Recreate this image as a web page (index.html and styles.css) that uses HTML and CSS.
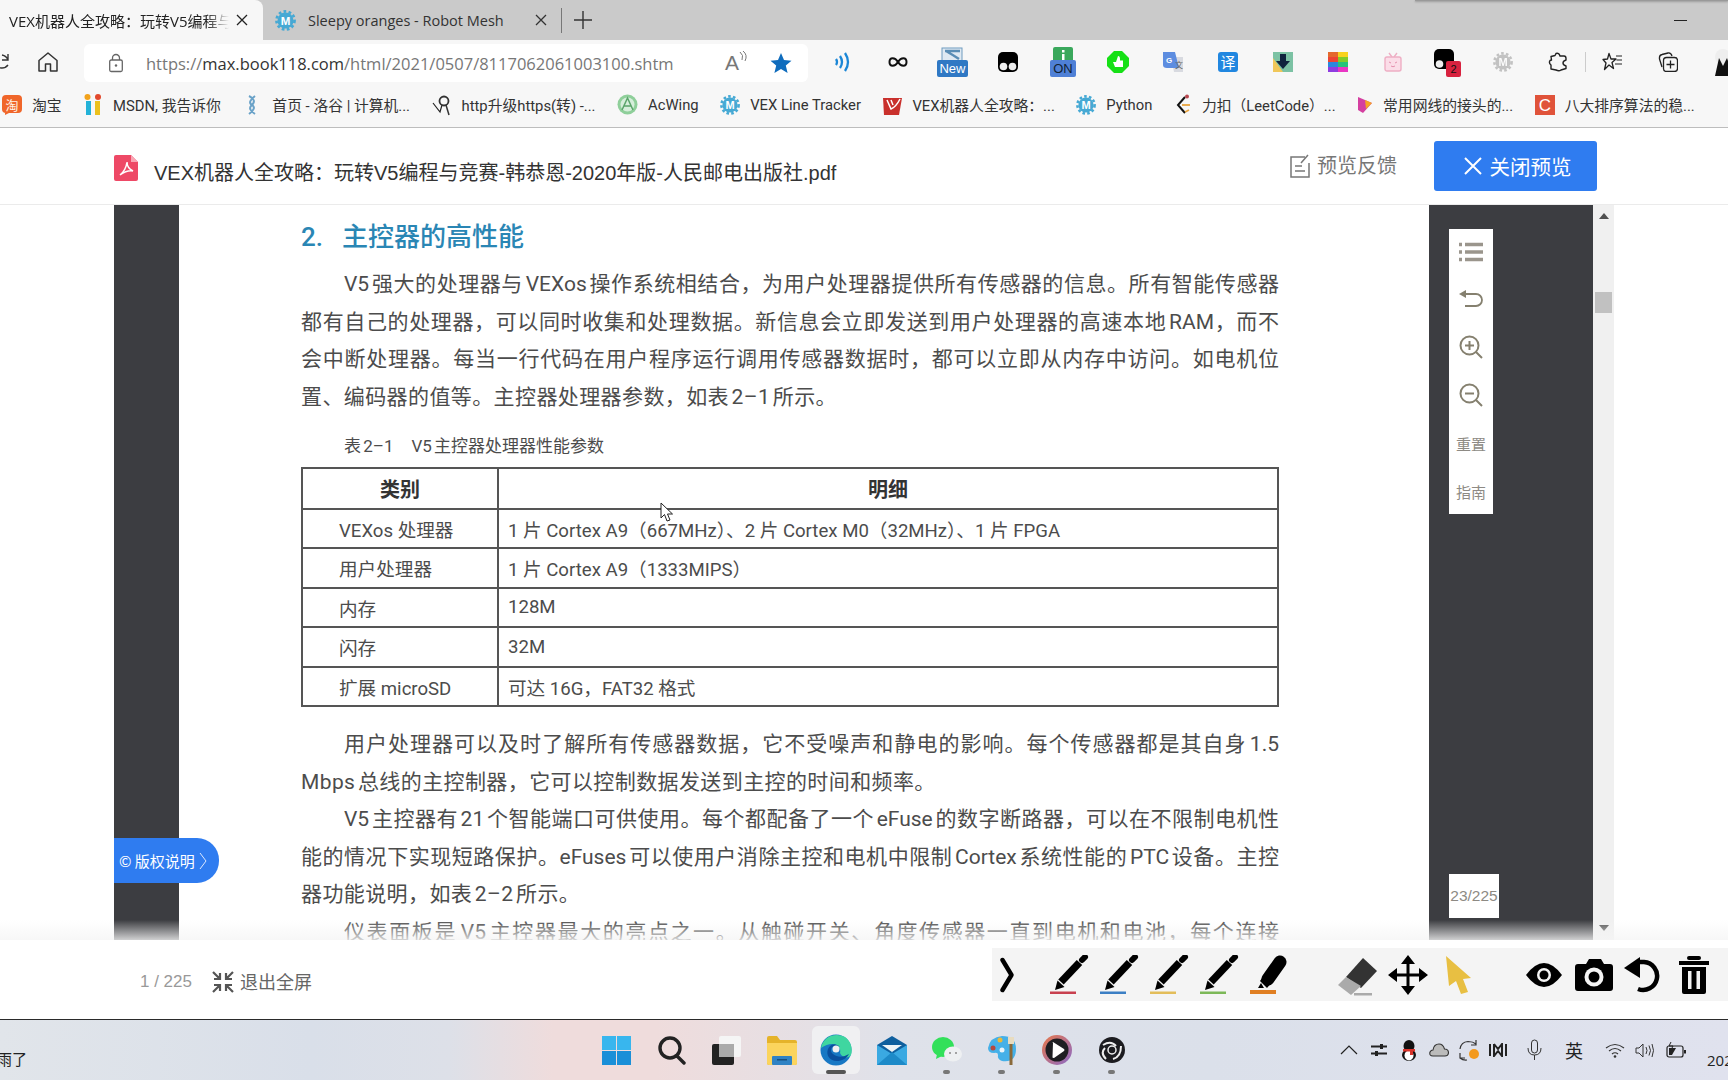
FILE: index.html
```html
<!DOCTYPE html>
<html lang="zh-CN">
<head>
<meta charset="utf-8">
<title>VEX机器人全攻略</title>
<link rel="stylesheet" href="styles.css">
</head>
<body>
<svg class="defs" width="0" height="0">
  <symbol id="gear" viewBox="0 0 20 20">
    <circle cx="10" cy="10" r="7.6" fill="#46a9d4"/>
    <circle cx="10" cy="10" r="8.6" fill="none" stroke="#46a9d4" stroke-width="2.6" stroke-dasharray="2.6 2.2"/>
    <text x="10" y="14" text-anchor="middle" font-size="11" font-weight="700" fill="#fff" font-family="Liberation Sans">M</text>
  </symbol>
  <symbol id="pen" viewBox="0 0 40 40">
    <path d="M11 27 L29.500 7.500" stroke="#000" stroke-width="7.500" fill="none"/>
    <path d="M32 5 L35 2" stroke="#000" stroke-width="6" stroke-linecap="round" fill="none"/>
    <path d="M5 35 L7.500 25.500 L14.500 32 Z" fill="#000"/>
  </symbol>
</svg>

<div class="app">
  <div class="tabs">
    <div class="tab active">
      <span class="tab-title">VEX机器人全攻略：玩转V5编程与竞赛-韩恭恩</span>
      <svg class="tab-x" width="12" height="12" viewBox="0 0 12 12"><path d="M1 1 L11 11 M11 1 L1 11" stroke="#222" stroke-width="1.300"/></svg>
    </div>
    <div class="tab second">
      <svg width="21" height="21"><use href="#gear"/></svg>
      <span class="tab-name">Sleepy oranges - Robot Mesh</span>
      <svg class="tab-x2" width="12" height="12" viewBox="0 0 12 12"><path d="M1 1 L11 11 M11 1 L1 11" stroke="#333" stroke-width="1.300"/></svg>
    </div>
    <span class="tab-div"></span>
    <svg class="tab-plus" width="18" height="18" viewBox="0 0 18 18"><path d="M9 0 V18 M0 9 H18" stroke="#333" stroke-width="1.400"/></svg>
    <span class="tabs-space"></span>
    <span class="minimize"></span>
  </div>

  <div class="toolbar">
    <svg class="tb-refresh" width="10" height="22" viewBox="0 0 10 22"><path d="M-6 11 A8 8 0 0 0 8 14 M8 9 A8 8 0 0 0 2 4 M8 3 V9 H2" stroke="#333" stroke-width="1.400" fill="none"/></svg>
    <svg class="tb-home" width="22" height="22" viewBox="0 0 22 22"><path d="M11 2 L2 9.500 V20 H8.500 V13 H13.500 V20 H20 V9.500 Z" stroke="#333" stroke-width="1.500" fill="none" stroke-linejoin="round"/></svg>
    <div class="address">
      <svg class="lock" width="18" height="20" viewBox="0 0 18 20"><path d="M5.500 7 V5 A3.500 3.500 0 0 1 12.500 5 V7" stroke="#666" stroke-width="1.300" fill="none"/><rect x="2.700" y="7" width="12.600" height="11.500" rx="1.500" stroke="#666" stroke-width="1.300" fill="none"/><circle cx="9" cy="12.500" r="1.200" fill="#666"/></svg>
      <span class="url">https://<b>max.book118.com</b>/html/2021/0507/8117062061003100.shtm</span>
      <span class="read">A<svg width="8" height="12" viewBox="0 0 8 12"><path d="M1 1 Q5 4 3 9 M4 0 Q9 4 6 10" stroke="#777" fill="none"/></svg></span>
      <svg class="star" width="22" height="22" viewBox="0 0 22 22"><path d="M11 1 L14 8 L21.500 8.700 L15.800 13.600 L17.600 21 L11 17 L4.400 21 L6.200 13.600 L.500 8.700 L8 8 Z" fill="#0f6cbd"/></svg>
    </div>
    <div class="exts">
      <span class="ext"><svg width="18" height="20" viewBox="0 0 18 20"><path d="M2 7 Q4 10 2 13 M6 4 Q10 10 6 16 M11 1 Q17 10 11 19" stroke="#1b86d6" stroke-width="2.300" fill="none"/></svg></span>
      <span class="ext"><svg width="20" height="12" viewBox="0 0 20 12"><path d="M10 6 C7 1 1.500 1 1.500 6 C1.500 11 7 11 10 6 C13 1 18.500 1 18.500 6 C18.500 11 13 11 10 6 Z" stroke="#111" stroke-width="2" fill="none"/></svg></span>
      <span class="ext"><svg width="31" height="30" viewBox="0 0 31 30"><rect x="5" y="1" width="20" height="16" fill="#dfe9f2" stroke="#6f9bbf"/><path d="M8 4 H23 M9 4 Q16 8 22 12" stroke="#5a8db5" stroke-width="2.500" fill="none"/><rect y="13" width="31" height="17" rx="2" fill="#2f78c4"/><text x="15.500" y="26" text-anchor="middle" font-size="13" fill="#fff" font-family="Liberation Sans">New</text></svg></span>
      <span class="ext"><svg width="20" height="20" viewBox="0 0 20 20"><rect width="20" height="20" rx="5" fill="#000"/><circle cx="5.500" cy="14.500" r="3.800" fill="#eee"/><circle cx="14.500" cy="14.500" r="3.800" fill="#eee"/></svg></span>
      <span class="ext"><svg width="26" height="30" viewBox="0 0 26 30"><path d="M3 2 Q3 0 5 0 H21 Q23 0 23 2 V14 H3 Z" fill="#3aa85c"/><rect x="12" y="3" width="2.500" height="2.500" fill="#fff"/><rect x="12" y="7" width="2.500" height="7" fill="#fff"/><rect y="13" width="26" height="17" rx="2" fill="#4f80d6"/><text x="13" y="26" text-anchor="middle" font-size="13" fill="#123" font-family="Liberation Sans">ON</text></svg></span>
      <span class="ext"><svg width="22" height="22" viewBox="0 0 22 22"><path d="M7 0 H15 L22 7 V15 L15 22 H7 L0 15 V7 Z" fill="#16e016"/><path d="M6 11 H9 L11 5 Q13 5 13 8 V9.500 H16 V16 H8 Z" fill="#fff"/></svg></span>
      <span class="ext"><svg width="22" height="22" viewBox="0 0 22 22"><path d="M9 6 H21 V21 H12 Z" fill="#d8dae0"/><path d="M1 1 H13 L17 17 H5 Q1 17 1 14 Z" fill="#5d8de0"/><text x="7" y="12" text-anchor="middle" font-size="8" font-weight="700" fill="#fff" font-family="Liberation Sans">G</text><text x="17" y="17" text-anchor="middle" font-size="8" fill="#666" font-family="Noto Sans CJK SC">文</text></svg></span>
      <span class="ext"><svg width="20" height="20" viewBox="0 0 20 20"><rect width="20" height="20" rx="3" fill="#2187e0"/><text x="10" y="15.500" text-anchor="middle" font-size="15" fill="#fff" font-family="Noto Sans CJK SC">译</text></svg></span>
      <span class="ext"><svg width="20" height="20" viewBox="0 0 20 20"><rect width="20" height="20" fill="#7cc2a4"/><path d="M0 6 L0 20 H10 Z" fill="#f0c75a"/><path d="M7 2 H13 V9 H17 L10 17 L3 9 H7 Z" fill="#10233d"/></svg></span>
      <span class="ext"><svg width="20" height="20" viewBox="0 0 20 20"><rect width="10" height="5" fill="#e4692e"/><rect x="10" width="10" height="5" fill="#f9d21e"/><rect y="5" width="10" height="5" fill="#ed4433"/><rect x="10" y="5" width="10" height="5" fill="#82cc2a"/><rect y="10" width="10" height="5" fill="#2b86dd"/><rect x="10" y="10" width="10" height="5" fill="#25c37a"/><rect y="15" width="10" height="5" fill="#8f3ce0"/><rect x="10" y="15" width="10" height="5" fill="#e936c4"/></svg></span>
      <span class="ext"><svg width="18" height="20" viewBox="0 0 18 20"><path d="M5 1 L8 5 M13 1 L10 5" stroke="#eeaec4" stroke-width="1.400"/><rect x="1" y="5" width="16" height="14" rx="2" fill="#fbdde8" stroke="#eeaec4" stroke-width="1.400"/><path d="M5 10 L7 11 M13 10 L11 11 M7 14 Q9 15.500 11 14" stroke="#e58fae" fill="none"/></svg></span>
      <span class="ext"><svg width="28" height="30" viewBox="0 0 28 30"><rect width="20" height="20" rx="5" y="2" fill="#000"/><circle cx="5.500" cy="17" r="3.800" fill="#eee"/><rect x="12" y="14" width="15" height="16" rx="2" fill="#d8223f"/><text x="19.500" y="26" text-anchor="middle" font-size="11" fill="#111" font-family="Liberation Sans">2</text></svg></span>
      <span class="ext"><svg class="faded" width="20" height="20"><use href="#gear"/></svg></span>
      <span class="ext"><svg width="20" height="20" viewBox="0 0 20 20"><path d="M8 1.500 Q11 .500 12 4 L16 4 Q18 4 18 6.500 L18 8 Q15 9 15 11 Q15 13 18 14 L18 16.500 L13 18 Q11 19.500 8 18 L3 17 L3 13 Q.500 11 2 8.500 L3.500 8 L3 4.500 L7 3.500 Z" stroke="#222" stroke-width="1.400" fill="none" stroke-linejoin="round"/></svg></span>
      <span class="ext-div"></span>
      <span class="ext"><svg width="22" height="20" viewBox="0 0 22 20"><path d="M7 1.500 L9 7 H14 L10 10.500 L11.500 16.500 L7 13 L2.500 17.500 L4 11 L1 7.500 L5.500 7 Z" stroke="#222" stroke-width="1.300" fill="none" stroke-linejoin="round"/><path d="M14 4 H20 M14.500 8 H20 M13 12 H20" stroke="#222" stroke-width="1.200"/></svg></span>
      <span class="ext"><svg width="20" height="20" viewBox="0 0 20 20"><path d="M4 15 L1.500 7 Q1 3 4 2.500 L10 1 Q13 .500 14 4" stroke="#222" stroke-width="1.300" fill="none"/><rect x="5.500" y="5.500" width="14" height="14" rx="3" stroke="#222" stroke-width="1.300" fill="#f7f7f7"/><path d="M12.500 8.500 V16.500 M8.500 12.500 H16.500" stroke="#222" stroke-width="1.300"/></svg></span>
      <span class="ext"><svg width="24" height="28" viewBox="0 0 24 28"><circle cx="12" cy="9" r="8" fill="#eee"/><path d="M4 28 L8 10 L12 18 L16 10 L22 28 Z" fill="#111"/></svg></span>
    </div>
  </div>

  <div class="bookmarks">
    <span class="bm first"><svg width="20" height="20" viewBox="0 0 20 20"><rect width="20" height="18" rx="4" fill="#f0662a"/><path d="M3 18 L3 20 L7 18 Z" fill="#f0662a"/><text x="10" y="15" text-anchor="middle" font-size="13" fill="#fff3e6" font-family="Noto Sans CJK SC">淘</text></svg>淘宝</span>
    <span class="bm"><svg width="20" height="22" viewBox="0 0 20 22"><rect x="3" y="7" width="5" height="14" fill="#23b2d8"/><circle cx="4.500" cy="3" r="3" fill="#f2a21b"/><rect x="12" y="7" width="5" height="14" fill="#ecc11d"/><circle cx="15" cy="3" r="3" fill="#e2492c"/></svg>MSDN, 我告诉你</span>
    <span class="bm"><svg width="20" height="22" viewBox="0 0 20 22"><path d="M7 2 Q15 6 10 11 Q5 15 13 20 M13 2 Q5 8 10 11 Q15 14 7 20" stroke="#6aa2c8" stroke-width="2" fill="none"/></svg>首页 - 洛谷 | 计算机...</span>
    <span class="bm"><svg width="20" height="22" viewBox="0 0 20 22"><path d="M1 9 L8 18 L10 11" stroke="#222" stroke-width="1.200" fill="none"/><circle cx="12" cy="7" r="4.500" stroke="#333" stroke-width="1.800" fill="none"/><path d="M14 11 L17 21" stroke="#333" stroke-width="1.500"/></svg>http升级https(转) -...</span>
    <span class="bm"><svg width="21" height="21" viewBox="0 0 21 21"><circle cx="10.500" cy="10.500" r="10" fill="#8fcf9a"/><circle cx="10.500" cy="10.500" r="7" fill="#d6eedb"/><path d="M5 16 L10.500 4 L16 16 M7 12 H14" stroke="#5aa46a" stroke-width="1.500" fill="none"/></svg>AcWing</span>
    <span class="bm"><svg width="20" height="20"><use href="#gear"/></svg>VEX Line Tracker</span>
    <span class="bm"><svg width="20" height="20" viewBox="0 0 20 20"><path d="M1 3 H20 L17 20 H2 Z" fill="#c9302c"/><path d="M5 5 L9 14 Q14 12 18 4 M9 5 L11 10" stroke="#fff" stroke-width="1.500" fill="none"/></svg>VEX机器人全攻略：...</span>
    <span class="bm"><svg width="20" height="20"><use href="#gear"/></svg>Python</span>
    <span class="bm"><svg width="18" height="22" viewBox="0 0 18 22"><path d="M11 3 L4 11 L11 19" stroke="#111" stroke-width="2" fill="none"/><path d="M8 11 H16" stroke="#e8a33d" stroke-width="1.800"/><circle cx="13" cy="2.500" r="2" fill="#b8474f"/><path d="M11 18 L15 16" stroke="#e8a33d" stroke-width="1.800"/></svg>力扣（LeetCode）...</span>
    <span class="bm"><svg width="16" height="18" viewBox="0 0 16 18"><path d="M1 1 L15 7 L6 17 L1 14 Z" fill="#d43fa0"/><path d="M8 4 L15 7 L9 13 Z" fill="#f5a623"/></svg>常用网线的接头的...</span>
    <span class="bm"><svg width="20" height="20" viewBox="0 0 20 20"><rect width="20" height="20" fill="#e0533a"/><text x="10" y="16" text-anchor="middle" font-size="17" fill="#fff" font-family="Liberation Sans">C</text></svg>八大排序算法的稳...</span>
  </div>

  <header class="docbar">
    <svg class="pdf-icon" width="24" height="26" viewBox="0 0 24 26"><path d="M2 0 H17 L24 7 V24 Q24 26 22 26 H2 Q0 26 0 24 V2 Q0 0 2 0 Z" fill="#ee4966"/><path d="M17 0 L24 7 H17 Z" fill="#f9a6b4"/><path d="M6 20 Q12 15 13 7 Q13 13 19 16 Q13 15 6 20 Z" fill="none" stroke="#fff" stroke-width="1.500"/></svg>
    <span class="doc-title">VEX机器人全攻略：玩转V5编程与竞赛-韩恭恩-2020年版-人民邮电出版社.pdf</span>
    <span class="doc-space"></span>
    <svg class="fb-icon" width="20" height="24" viewBox="0 0 20 24"><path d="M15 3 H1 V23 H19 V9" stroke="#777" stroke-width="1.500" fill="none"/><path d="M5 12 H12 M5 17 H15 M11 9 L18 1" stroke="#777" stroke-width="1.500"/></svg>
    <span class="feedback">预览反馈</span>
    <button class="close-preview"><svg width="18" height="18" viewBox="0 0 18 18"><path d="M1 1 L17 17 M17 1 L1 17" stroke="#fff" stroke-width="2"/></svg>关闭预览</button>
  </header>

  <main class="reader">
    <div class="gutter-left"></div>
    <article class="page">
      <h2 class="sec">2.<span class="sec-t">主控器的高性能</span></h2>
      <div class="para">
        <div class="ln in">V5 强大的处理器与 VEXos 操作系统相结合，为用户处理器提供所有传感器的信息。所有智能传感器</div>
        <div class="ln">都有自己的处理器，可以同时收集和处理数据。新信息会立即发送到用户处理器的高速本地 RAM，而不</div>
        <div class="ln">会中断处理器。每当一行代码在用户程序运行调用传感器数据时，都可以立即从内存中访问。如电机位</div>
        <div class="ln end">置、编码器的值等。主控器处理器参数，如表 2–1 所示。</div>
      </div>
      <div class="caption">表 2–1<span class="cap-b">V5 主控器处理器性能参数</span></div>
      <table class="spec">
        <tr class="r1"><th class="c1">类别</th><th>明细</th></tr>
        <tr class="r2"><td class="c1">VEXos 处理器</td><td>1 片 Cortex A9（667MHz）、2 片 Cortex M0（32MHz）、1 片 FPGA</td></tr>
        <tr class="r3"><td class="c1">用户处理器</td><td>1 片 Cortex A9（1333MIPS）</td></tr>
        <tr class="r2"><td class="c1">内存</td><td>128M</td></tr>
        <tr class="r3"><td class="c1">闪存</td><td>32M</td></tr>
        <tr class="r2"><td class="c1">扩展 microSD</td><td>可达 16G，FAT32 格式</td></tr>
      </table>
      <div class="para after">
        <div class="ln in">用户处理器可以及时了解所有传感器数据，它不受噪声和静电的影响。每个传感器都是其自身 1.5</div>
        <div class="ln end">Mbps 总线的主控制器，它可以控制数据发送到主控的时间和频率。</div>
        <div class="ln in">V5 主控器有 21 个智能端口可供使用。每个都配备了一个 eFuse 的数字断路器，可以在不限制电机性</div>
        <div class="ln">能的情况下实现短路保护。eFuses 可以使用户消除主控和电机中限制 Cortex 系统性能的 PTC 设备。主控</div>
        <div class="ln end">器功能说明，如表 2–2 所示。</div>
        <div class="ln in">仪表面板是 V5 主控器最大的亮点之一。从触碰开关、角度传感器一直到电机和电池，每个连接</div>
      </div>
      <svg class="cursor" width="14" height="21" viewBox="0 0 14 21"><path d="M1 1 V16 L4.500 12.500 L7 19 L10 18 L7.500 12 H12.500 Z" fill="#fff" stroke="#222" stroke-width="1"/></svg>
    </article>
    <aside class="gutter-right">
      <div class="side-tools">
        <span class="st"><svg width="24" height="20" viewBox="0 0 24 20"><path d="M0 2.500 H3 M6 2.500 H24 M0 10 H3 M6 10 H24 M0 17.500 H3 M6 17.500 H24" stroke="#9a958c" stroke-width="3.500"/></svg></span>
        <span class="st"><svg width="24" height="18" viewBox="0 0 24 18"><path d="M2 4 H17 A6 6 0 0 1 17 16 H6" stroke="#85806f" stroke-width="1.800" fill="none"/><path d="M7 0 V8 L0 4 Z" fill="#85806f"/></svg></span>
        <span class="st"><svg width="24" height="24" viewBox="0 0 24 24"><circle cx="10.500" cy="10.500" r="9" stroke="#85806f" stroke-width="2" fill="none"/><path d="M6 10.500 H15 M10.500 6 V15 M17 17 L23 23" stroke="#85806f" stroke-width="2"/></svg></span>
        <span class="st"><svg width="24" height="24" viewBox="0 0 24 24"><circle cx="10.500" cy="10.500" r="9" stroke="#85806f" stroke-width="2" fill="none"/><path d="M6 10.500 H15 M17 17 L23 23" stroke="#85806f" stroke-width="2"/></svg></span>
        <span class="st txt">重置</span>
        <span class="st txt">指南</span>
      </div>
      <div class="page-no">23/225</div>
    </aside>
    <div class="scrollbar">
      <span class="arrow up"></span>
      <span class="thumb"></span>
      <span class="arrow down"></span>
    </div>
    <div class="fade"></div>
    <div class="copyright">© 版权说明 <svg width="8" height="18" viewBox="0 0 8 18"><path d="M1 1 L7 9 L1 17" stroke="#dbe8ff" fill="none"/></svg></div>
  </main>

  <div class="bottom">
    <span class="pg">1 / 225</span>
    <svg class="exit-icon" width="22" height="22" viewBox="0 0 22 22"><path d="M1 1 L7 7 M8 2 V8 H2 M21 1 L15 7 M14 2 V8 H20 M1 21 L7 15 M8 20 V14 H2 M21 21 L15 15 M14 20 V14 H20" stroke="#555" stroke-width="2.200" fill="none"/></svg>
    <span class="exit">退出全屏</span>
    <span class="doc-space"></span>
    <div class="tools">
      <span class="sp-a"><svg class="chev" width="14" height="36" viewBox="0 0 14 36"><path d="M2.500 3 L11.500 18 L2.500 33" stroke="#000" stroke-width="4.400" fill="none" stroke-linecap="round" stroke-linejoin="round"/></svg></span>
      <span class="tool"><svg width="40" height="40" viewBox="0 0 40 40"><use href="#pen"/><rect y="36.500" width="26" height="2.500" fill="#c8404f"/></svg></span>
      <span class="tool"><svg width="40" height="40" viewBox="0 0 40 40"><use href="#pen"/><rect y="36.500" width="26" height="2.500" fill="#3b7fc4"/></svg></span>
      <span class="tool"><svg width="40" height="40" viewBox="0 0 40 40"><use href="#pen"/><rect y="36.500" width="26" height="2.500" fill="#e3bd5a"/></svg></span>
      <span class="tool"><svg width="40" height="40" viewBox="0 0 40 40"><use href="#pen"/><rect y="36.500" width="26" height="2.500" fill="#7cb858"/></svg></span>
      <span class="tool"><svg width="40" height="40" viewBox="0 0 40 40"><path d="M18 24 L30 7" stroke="#000" stroke-width="13" stroke-linecap="round"/><path d="M10 26 L14 20 L22 27 L17 33 Z" fill="#000"/><path d="M8 33 L11 28 L14 33 Z" fill="#000"/><rect x="0" y="35" width="26" height="4" fill="#e07f22"/></svg></span>
      <span class="sp-b"></span>
      <span class="tool"><svg width="42" height="42" viewBox="0 0 42 42"><path d="M9 23 L26 4 L40 17 L24 34 Z" fill="#333"/><path d="M9 23 L1 31 L14 41 L24 32 Z" fill="#aaa"/><rect x="17" y="39" width="18" height="2.500" fill="#aaa"/></svg></span>
      <span class="tool"><svg width="40" height="40" viewBox="0 0 40 40"><path d="M20 4 V36 M4 20 H36" stroke="#000" stroke-width="3"/><path d="M20 0 L27 9 H13 Z M20 40 L27 31 H13 Z M0 20 L9 13 V27 Z M40 20 L31 13 V27 Z" fill="#000"/></svg></span>
      <span class="tool"><svg width="26" height="38" viewBox="0 0 26 38"><path d="M1 0 L26 22 L18 23 L23 36 L16 38 L11 25 L4 30 Z" fill="#e8bf42"/></svg></span>
      <span class="sp-c"></span>
      <span class="tool"><svg width="36" height="24" viewBox="0 0 36 24"><path d="M0 12 Q18 -12 36 12 Q18 36 0 12 Z" fill="#000"/><circle cx="18" cy="12" r="7" fill="#f4f4f4"/><circle cx="18" cy="12" r="4.500" fill="#000"/></svg></span>
      <span class="tool"><svg width="38" height="32" viewBox="0 0 38 32"><path d="M3 5 H11 L14 0 H26 L29 5 H35 Q38 5 38 8 V29 Q38 32 35 32 H3 Q0 32 0 29 V8 Q0 5 3 5 Z" fill="#000"/><circle cx="19" cy="18" r="9.500" fill="#f4f4f4"/><circle cx="19" cy="18" r="5.500" fill="#000"/></svg></span>
      <span class="tool"><svg width="40" height="36" viewBox="0 0 40 36"><path d="M14 5 H20 A14 14 0 1 1 14 32" stroke="#000" stroke-width="4.500" fill="none"/><path d="M16 0 V21 L0 11 Z" fill="#000"/></svg></span>
      <span class="tool"><svg width="30" height="38" viewBox="0 0 30 38"><path d="M0 7 H30 M10 2 H20" stroke="#000" stroke-width="4" stroke-linecap="round"/><path d="M3 11 H27 V36 Q27 38 25 38 H5 Q3 38 3 36 Z" fill="#000"/><rect x="9" y="15" width="3.500" height="18" fill="#f4f4f4"/><rect x="17.500" y="15" width="3.500" height="18" fill="#f4f4f4"/></svg></span>
    </div>
  </div>

  <footer class="taskbar">
    <div class="weather"><span>雨了</span></div>
    <div class="apps">
      <span class="app-i"><svg width="29" height="29" viewBox="0 0 29 29"><rect width="14" height="14" fill="#38b6ee"/><rect x="15" width="14" height="14" fill="#38b6ee"/><rect y="15" width="14" height="14" fill="#1a8fd8"/><rect x="15" y="15" width="14" height="14" fill="#1a8fd8"/></svg></span>
      <span class="app-i"><svg width="28" height="29" viewBox="0 0 28 29"><circle cx="12" cy="12" r="10" stroke="#222" stroke-width="3.400" fill="none"/><path d="M19 20 L26 27" stroke="#222" stroke-width="3.400" stroke-linecap="round"/></svg></span>
      <span class="app-i"><svg width="29" height="29" viewBox="0 0 29 29"><rect y="8" width="22" height="21" rx="2" fill="#222"/><rect x="7" width="22" height="21" rx="2" fill="#f5f5f5"/><rect x="7" y="8" width="15" height="13" fill="#aaa"/></svg></span>
      <span class="app-i"><svg width="30" height="29" viewBox="0 0 30 29"><path d="M0 2 Q0 0 2 0 H10 L13 4 H28 Q30 4 30 6 V27 Q30 29 28 29 H2 Q0 29 0 27 Z" fill="#e5b32a"/><path d="M0 7 H30 V27 Q30 29 28 29 H2 Q0 29 0 27 Z" fill="#fbd45d"/><rect x="5" y="20" width="20" height="9" rx="1" fill="#2f82c4"/><rect x="10" y="23" width="10" height="1.500" fill="#174f7f"/></svg></span>
      <span class="app-i edge"><svg width="32" height="32" viewBox="0 0 32 32"><circle cx="16" cy="16" r="15.500" fill="#1878c4"/><path d="M1 14 C3 2 16 -2 25 3 C31 7 33 15 31 21 C29 25 22 24 20 19 C22 11 12 6 1 14 Z" fill="#3fd6a0"/><path d="M20 13 C13 9 8 16 13 20 C18 24 24 23 29 20 C25 28 12 30 8 22 C5 14 13 6 20 13 Z" fill="#0a4f9e"/><circle cx="16" cy="15" r="3.500" fill="#f0f0f2"/></svg><i class="pill"></i></span>
      <span class="app-i"><svg width="30" height="29" viewBox="0 0 30 29"><rect y="9" width="30" height="20" fill="#3aa9e2"/><path d="M0 9 L15 0 L30 9 L15 18 Z" fill="#0f5f9e"/><path d="M5 9 H25 L15 16 Z" fill="#eef4f7"/><path d="M0 29 L15 16 L30 29 Z" fill="#1d8ac8"/></svg></span>
      <span class="app-i"><svg width="30" height="26" viewBox="0 0 30 26"><ellipse cx="11" cy="10" rx="11" ry="10" fill="#32e05a"/><path d="M5 17 L4 22 L10 19 Z" fill="#32e05a"/><ellipse cx="21" cy="17" rx="9" ry="7.500" fill="#eef0f2"/><circle cx="18" cy="16" r="1" fill="#888"/><circle cx="24" cy="16" r="1" fill="#888"/></svg><i class="dot"></i></span>
      <span class="app-i"><svg width="28" height="30" viewBox="0 0 28 30"><path d="M14 1 Q28 1 28 14 Q28 28 14 26 Q9 24 10 20 Q10 17 6 18 Q0 18 0 13 Q2 2 14 1 Z" fill="#45b0e8"/><circle cx="5" cy="13" r="2.500" fill="#b5483f"/><circle cx="12" cy="5" r="2.500" fill="#e9b93b"/><circle cx="14" cy="15" r="2.500" fill="#eaf4fa"/><path d="M23 4 V30" stroke="#8a6a3b" stroke-width="3"/><path d="M20 2 H26 V9 H20 Z" fill="#e8dcc0"/></svg><i class="dot"></i></span>
      <span class="app-i"><svg width="30" height="30" viewBox="0 0 30 30"><defs><linearGradient id="ring" x1="0" y1="0" x2="1" y2="1"><stop offset="0" stop-color="#e8784a"/><stop offset="1" stop-color="#8a6ac8"/></linearGradient></defs><circle cx="15" cy="15" r="15" fill="url(#ring)"/><circle cx="15" cy="15" r="11.500" fill="#1e1e22"/><path d="M11 8 Q10 7 11 7 L22 14 Q23 15 22 16 L12 23 Q10 23 10.500 22 Z" fill="#fff"/></svg><i class="dot"></i></span>
      <span class="app-i"><svg width="26" height="26" viewBox="0 0 26 26"><circle cx="13" cy="13" r="13" fill="#1c1c20"/><circle cx="13" cy="13" r="4" fill="none" stroke="#eee" stroke-width="1.500"/><path d="M4 8 Q12 3 17 9 M22 9 Q22 20 14 22 M7 22 Q1 16 6 11" stroke="#eee" stroke-width="2" fill="none"/></svg><i class="dot"></i></span>
    </div>
    <span class="doc-space"></span>
    <div class="tray">
      <span class="ti w18"><svg width="18" height="10" viewBox="0 0 18 10"><path d="M1 9 L9 1 L17 9" stroke="#222" stroke-width="1.200" fill="none"/></svg></span>
      <span class="ti w16"><svg width="16" height="14" viewBox="0 0 16 14"><path d="M0 3.500 H16 M0 10.500 H16" stroke="#222" stroke-width="2"/><rect x="9" y="1" width="3" height="5" fill="#222"/><rect x="4" y="8" width="3" height="5" fill="#222"/></svg></span>
      <span class="ti w16"><svg width="16" height="21" viewBox="0 0 16 21"><ellipse cx="8" cy="6" rx="5.500" ry="6" fill="#111"/><ellipse cx="8" cy="15" rx="7" ry="6" fill="#111"/><ellipse cx="8" cy="15.500" rx="4.500" ry="5" fill="#fff"/><rect x="2" y="9" width="12" height="2.500" fill="#d8332a"/><rect x="9" y="10" width="3" height="5" fill="#d8332a"/></svg></span>
      <span class="ti w20"><svg width="20" height="14" viewBox="0 0 20 14"><path d="M4 13 Q0 13 1 9 Q2 7 4 7 Q5 1 10 1 Q14 1 15.500 6 Q19.500 6 19.500 10 Q19 13 16 13 Z" fill="#bbb" stroke="#333" stroke-width="1.100"/></svg></span>
      <span class="ti w21"><svg width="21" height="21" viewBox="0 0 21 21"><path d="M1 9 Q2 2 9 1.500 Q14 1.500 17 4 M17 0 V5 H12 M1 13 V18 H6 M1 18 Q4 20.500 8 20" stroke="#333" stroke-width="1.200" fill="none"/><circle cx="15" cy="14" r="5" fill="#f39a1f"/></svg></span>
      <span class="ti w18"><svg width="18" height="14" viewBox="0 0 18 14"><path d="M1 1 V13 M5 1 V13 L9 8 L13 13 V1 L9 6 L5 1 M17 1 V13" stroke="#222" stroke-width="2" fill="none"/></svg></span>
      <span class="ti w15"><svg width="15" height="22" viewBox="0 0 15 22"><rect x="4.500" y="1" width="6" height="13" rx="3" stroke="#333" fill="none"/><path d="M1 9 Q1 16 7.500 16 Q14 16 14 9 M7.500 16 V21" stroke="#333" fill="none"/></svg></span>
      <span class="ti ime">英</span>
      <span class="ti w20"><svg width="20" height="15" viewBox="0 0 20 15"><path d="M1 5 Q10 -2 19 5 M4 8 Q10 3 16 8 M7 11 Q10 8.500 13 11" stroke="#333" stroke-width="1.200" fill="none"/><circle cx="10" cy="13.500" r="1.300" fill="#333"/></svg></span>
      <span class="ti w20"><svg width="20" height="15" viewBox="0 0 20 15"><path d="M1 5 H4 L8 1 V14 L4 10 H1 Z" stroke="#333" fill="none"/><path d="M11 4 Q13 7.500 11 11 M14 2.500 Q17 7.500 14 12.500 M17 1 Q20 7.500 17 14" stroke="#333" fill="none"/></svg></span>
      <span class="ti w20"><svg width="20" height="17" viewBox="0 0 20 17"><rect x="1" y="4" width="16" height="11" rx="2" stroke="#222" stroke-width="1.200" fill="none"/><rect x="18" y="8" width="2" height="3.500" fill="#222"/><path d="M3 6 H10 L6 13 H3 Z" fill="#222"/><path d="M5 0 L3 4 L7 4 L5 8" stroke="#222" fill="none"/></svg></span>
      <span class="clock">2022/5/1</span>
    </div>
  </footer>
</div>
</body>
</html>
```
FILE: styles.css
```css
* { box-sizing: border-box; }
html, body { margin: 0; height: 100%; overflow: hidden; }
body { font-family: "Open Sans", "Noto Sans CJK SC", sans-serif; background: #fff; color: #222; }
svg { display: block; flex: none; }
.defs { position: absolute; }
.app { width: 1728px; height: 1080px; display: flex; flex-direction: column; overflow: hidden; }

/* tabs */
.tabs { height: 40px; background: #cacaca; display: flex; align-items: center; flex: none; position: relative; }
.tab { height: 40px; display: flex; align-items: center; font-size: 14.500px; flex: none; }
.tab.active { width: 263px; background: #f7f7f7; border-radius: 0 8px 0 0; padding-left: 9px; position: relative; font-size: 15px; }
.tab-title { width: 220px; white-space: nowrap; overflow: hidden; -webkit-mask-image: linear-gradient(90deg, #000 90%, transparent); mask-image: linear-gradient(90deg, #000 90%, transparent); }
.tab-x { margin-left: 7px; }
.tab.second { width: 296px; padding-left: 12px; color: #333; }
.tab-name { margin-left: 12px; width: 227px; white-space: nowrap; }
.tab-div { width: 1px; height: 25px; background: #777; margin-left: 2px; }
.tab-plus { margin-left: 12px; }
.tabs-space, .doc-space { flex: 1; }
.minimize { width: 13px; height: 1px; background: #222; margin-right: 41px; }
.tabs::after { content: ""; position: absolute; right: 0; top: 0; width: 313px; height: 1px; background: #999; box-shadow: 0 1px 2px #888; }

/* toolbar */
.toolbar { height: 44px; background: #f7f7f7; display: flex; align-items: center; flex: none; overflow: hidden; }
.tb-home { margin-left: 27px; }
.address { width: 724px; flex: none; height: 38px; margin-left: 25px; background: #fff; border-radius: 6px; display: flex; align-items: center; padding-left: 23px; margin-top: 2px; }
.url { margin-left: 21px; width: 556px; font-size: 16.500px; color: #777; white-space: nowrap; }
.url b { font-weight: 400; color: #333; }
.read { display: flex; width: 45px; font-size: 21px; font-family: "Liberation Sans", sans-serif; color: #777; margin-left: 23px; }
.exts { display: flex; align-items: center; margin-left: 7px; flex: none; }
.ext { width: 55px; height: 30px; display: flex; align-items: center; justify-content: center; flex: none; }
.ext-div { width: 1px; height: 20px; background: #ccc; margin-right: -1px; }
.faded { opacity: .55; filter: grayscale(1); }

/* bookmarks */
.bookmarks { height: 44px; flex: none; background: #f7f7f7; border-bottom: 1px solid #bdbdbd; display: flex; align-items: center; font-size: 14.800px; font-family: "Roboto", "Noto Sans CJK SC", sans-serif; color: #333; gap: 21.500px; padding: 0 0 2px 2px; }
.bm { display: flex; align-items: center; gap: 10px; white-space: nowrap; flex: none; }

/* document header */
.docbar { height: 77px; flex: none; background: #fff; border-bottom: 1px solid #ebebeb; display: flex; align-items: center; padding: 0 131px 0 114px; }
.pdf-icon { margin-top: 4px; }
.doc-title { font-size: 20px; margin: 10px 0 0 16px; color: #333; font-family: "Liberation Sans", "Noto Sans CJK SC", sans-serif; white-space: nowrap; }
.fb-icon { margin-right: 7px; }
.feedback { font-size: 20px; color: #777; margin-right: 37px; margin-top: -3px; }
.close-preview { width: 163px; height: 50px; border: 0; border-radius: 3px; background: #2f7cf0; color: #fff; display: flex; align-items: center; justify-content: center; gap: 8px; font: 20.500px "Noto Sans CJK SC", sans-serif; padding: 0 0 0 4px; }

/* reader */
.reader { flex: 1; min-height: 0; display: flex; padding-left: 114px; position: relative; overflow: hidden; background: #fff; }
.gutter-left { width: 65px; background: #3c3d41; flex: none; }
.page { width: 1250px; flex: none; padding: 14px 150px 0 122px; position: relative; overflow: hidden; font-family: "Roboto", "Noto Sans CJK SC", sans-serif; color: #4c4c4c; }
.sec { margin: 0 0 11px; font-size: 26px; line-height: 36px; font-weight: 500; color: #2a86b4; display: flex; }
.sec-t { margin-left: 19px; }
.ln { font-size: 21px; line-height: 37.500px; height: 37.500px; text-align: justify; text-align-last: justify; overflow: hidden; word-spacing: -3px; }
.ln.in { padding-left: 43px; }
.ln.end { text-align-last: left; letter-spacing: .4px; }
.caption { margin-top: 15px; padding-left: 43px; font-size: 17px; line-height: 30px; word-spacing: -2px; }
.cap-b { margin-left: 18px; }
.spec { width: 978px; margin-top: 6px; border-collapse: collapse; table-layout: fixed; font-size: 18.600px; color: #4c4c4c; }
.spec th, .spec td { border: 2px solid #555; padding: 0 0 1px 9px; }
.spec th { text-align: center; font-size: 20px; font-weight: 700; padding: 0; color: #333; }
.spec .c1 { width: 196px; }
.spec td.c1 { padding-left: 36px; }
.r1 { height: 41px; }
.r2 { height: 39px; }
.r3 { height: 40px; }
.para.after { margin-top: 19px; }
.cursor { position: absolute; left: 481px; top: 297px; }

.gutter-right { width: 164px; flex: none; background: #3c3d41; padding: 24px 0 22px 20px; display: flex; flex-direction: column; justify-content: space-between; }
.side-tools { width: 44px; height: 285px; background: #fff; display: flex; flex-direction: column; }
.st { height: 48px; display: flex; align-items: center; justify-content: center; flex: none; }
.st:first-child { height: 46px; }
.st.txt { font-size: 15px; color: #8d8a84; }
.page-no { width: 50px; height: 44px; background: #fff; color: #8d8a84; font-size: 15.500px; display: flex; align-items: center; justify-content: center; font-family: "Liberation Sans", sans-serif; }

.scrollbar { width: 21px; flex: none; background: #f0f0f0; display: flex; flex-direction: column; align-items: center; padding: 8px 0 9px; }
.arrow { width: 0; height: 0; border-left: 5px solid transparent; border-right: 5px solid transparent; flex: none; }
.arrow.up { border-bottom: 6px solid #505050; }
.arrow.down { border-top: 6px solid #505050; margin-top: auto; }
.thumb { width: 17px; height: 21px; background: #c1c1c1; margin-top: 73px; }

.fade { position: absolute; left: 0; right: 0; bottom: 0; height: 20px; background: linear-gradient(rgba(245,245,245,0), rgba(245,245,245,.8)); }
.copyright { position: absolute; left: 114px; top: 633px; width: 105px; height: 45px; border-radius: 0 22px 22px 0; background: #2f7cf0; color: #fff; font-size: 15px; display: flex; align-items: center; gap: 4px; padding-left: 5px; white-space: nowrap; font-family: "Noto Sans CJK SC", sans-serif; }

/* bottom bar */
.bottom { height: 79px; flex: none; background: #fff; display: flex; align-items: flex-start; padding-left: 140px; }
.pg { font-size: 17px; color: #999; margin-top: 32px; font-family: "Liberation Sans", sans-serif; }
.exit-icon { margin: 31px 0 0 20px; }
.exit { font-size: 18px; color: #666; margin: 28px 0 0 6px; }
.tools { width: 736px; height: 53px; margin-top: 8px; background: #f4f4f4; display: flex; align-items: center; flex: none; }
.sp-a { width: 53px; padding-left: 8px; flex: none; }
.sp-b { width: 38px; flex: none; }
.sp-c { width: 36px; flex: none; }
.tool { width: 50px; display: flex; justify-content: center; flex: none; }

/* taskbar */
.taskbar { height: 61px; flex: none; border-top: 1px solid #2a2a2a; display: flex; align-items: stretch; position: relative; background: linear-gradient(90deg, #e1e5ea 0, #d9dfe9 18%, #dde0e8 26%, #efdcdc 32%, #efdcdc 38%, #dfe2ea 52%, #dbe0ea 70%, #e0e2ee 100%); }
.weather { width: 589px; flex: none; font-size: 15px; color: #222; overflow: hidden; padding-top: 29px; }
.weather span { display: block; margin-left: -3px; line-height: 20px; }
.apps { display: flex; flex: none; }
.app-i { width: 55px; display: flex; align-items: center; justify-content: center; position: relative; flex: none; height: 60px; }
.app-i.edge { background: #f0f0f2; border-radius: 6px; width: 48px; height: 48px; margin: 6px 4px 0 3px; }
.pill { position: absolute; left: 14px; bottom: 0; width: 20px; height: 4px; border-radius: 2px; background: #555; }
.dot { position: absolute; left: 24px; bottom: 6px; width: 7px; height: 4px; border-radius: 2px; background: #777; }
.tray { display: flex; align-items: center; width: 398px; padding-left: 10px; flex: none; overflow: hidden; }
.ti { display: flex; justify-content: center; flex: none; }
.w18 { width: 18px; } .w16 { width: 16px; } .w20 { width: 20px; } .w21 { width: 21px; } .w15 { width: 15px; }
.tray .ti:nth-child(1) { margin-right: 13px; }
.tray .ti:nth-child(2) { margin-right: 14px; }
.tray .ti:nth-child(3) { margin-right: 12px; }
.tray .ti:nth-child(4) { margin-right: 10px; }
.tray .ti:nth-child(5) { margin-right: 9px; }
.tray .ti:nth-child(6) { margin-right: 20px; }
.tray .ti:nth-child(7) { margin-right: 23px; }
.tray .ti:nth-child(8) { margin-right: 22px; }
.tray .ti:nth-child(9) { margin-right: 10px; }
.tray .ti:nth-child(10) { margin-right: 11px; }
.tray .ti:nth-child(11) { margin-right: 21px; }
.ime { font-size: 18px; width: 18px; }
.clock { font-size: 15px; margin-top: 20px; white-space: nowrap; font-family: "Open Sans", sans-serif; flex: none; }
```
